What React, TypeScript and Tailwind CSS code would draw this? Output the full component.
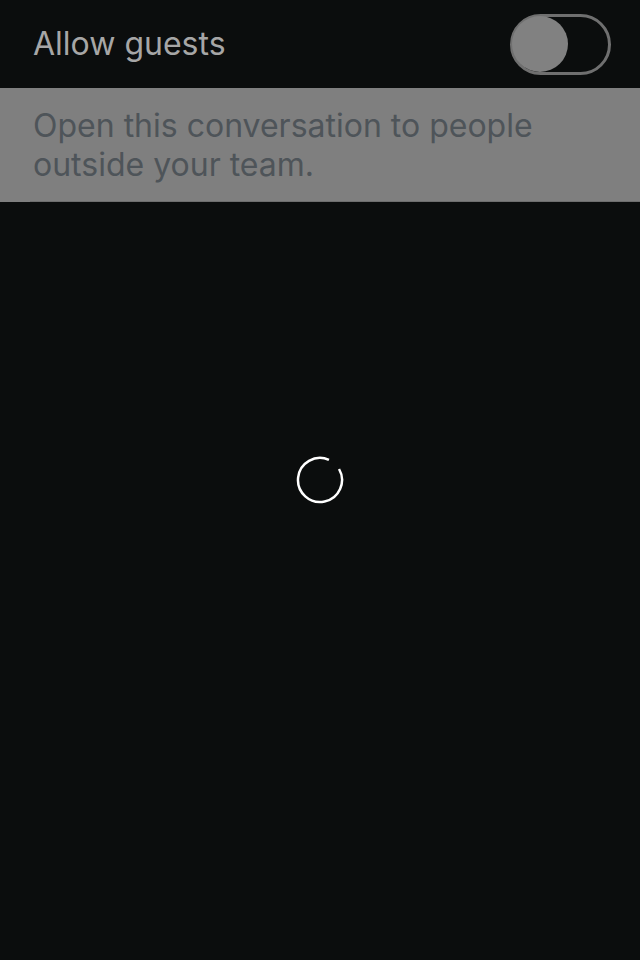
import React from "react";

export default function App() {
  return (
    <div className="w-[640px] h-[960px] bg-[#0b0d0d] flex flex-col" style={{ fontFamily: "Inter, Roboto, 'Liberation Sans', sans-serif" }}>
      <div className="h-[88px] flex items-center justify-between pl-[33px] pr-[29px]">
        <span className="text-[32px] text-[#a6a6a6] leading-none -mt-[1px]">Allow guests</span>
        <div className="w-[101px] h-[61px] rounded-full border-[3px] border-[#6f6f6f] flex items-center">
          <div className="w-[56px] h-[56px] rounded-full bg-[#818181] -ml-[1px]" />
        </div>
      </div>
      <div className="bg-[#7f7f7f] h-[114px] flex flex-col">
        <div className="flex-1 pl-[33px] pr-[60px] pt-[18px] text-[32px] leading-[39px] text-[#4e5459]">
          Open this conversation to people outside your team.
        </div>
        <div className="ml-[30px] h-[1px] bg-[#6e6e6e]" />
      </div>
      <div className="flex-1 flex items-center justify-center pb-[202px]">
        <svg width="50" height="50" viewBox="0 0 50 50">
          <path d="M 44.05 14 A 22 22 0 1 1 33.95 4.9" fill="none" stroke="#ffffff" strokeWidth="2.5" />
        </svg>
      </div>
    </div>
  );
}
